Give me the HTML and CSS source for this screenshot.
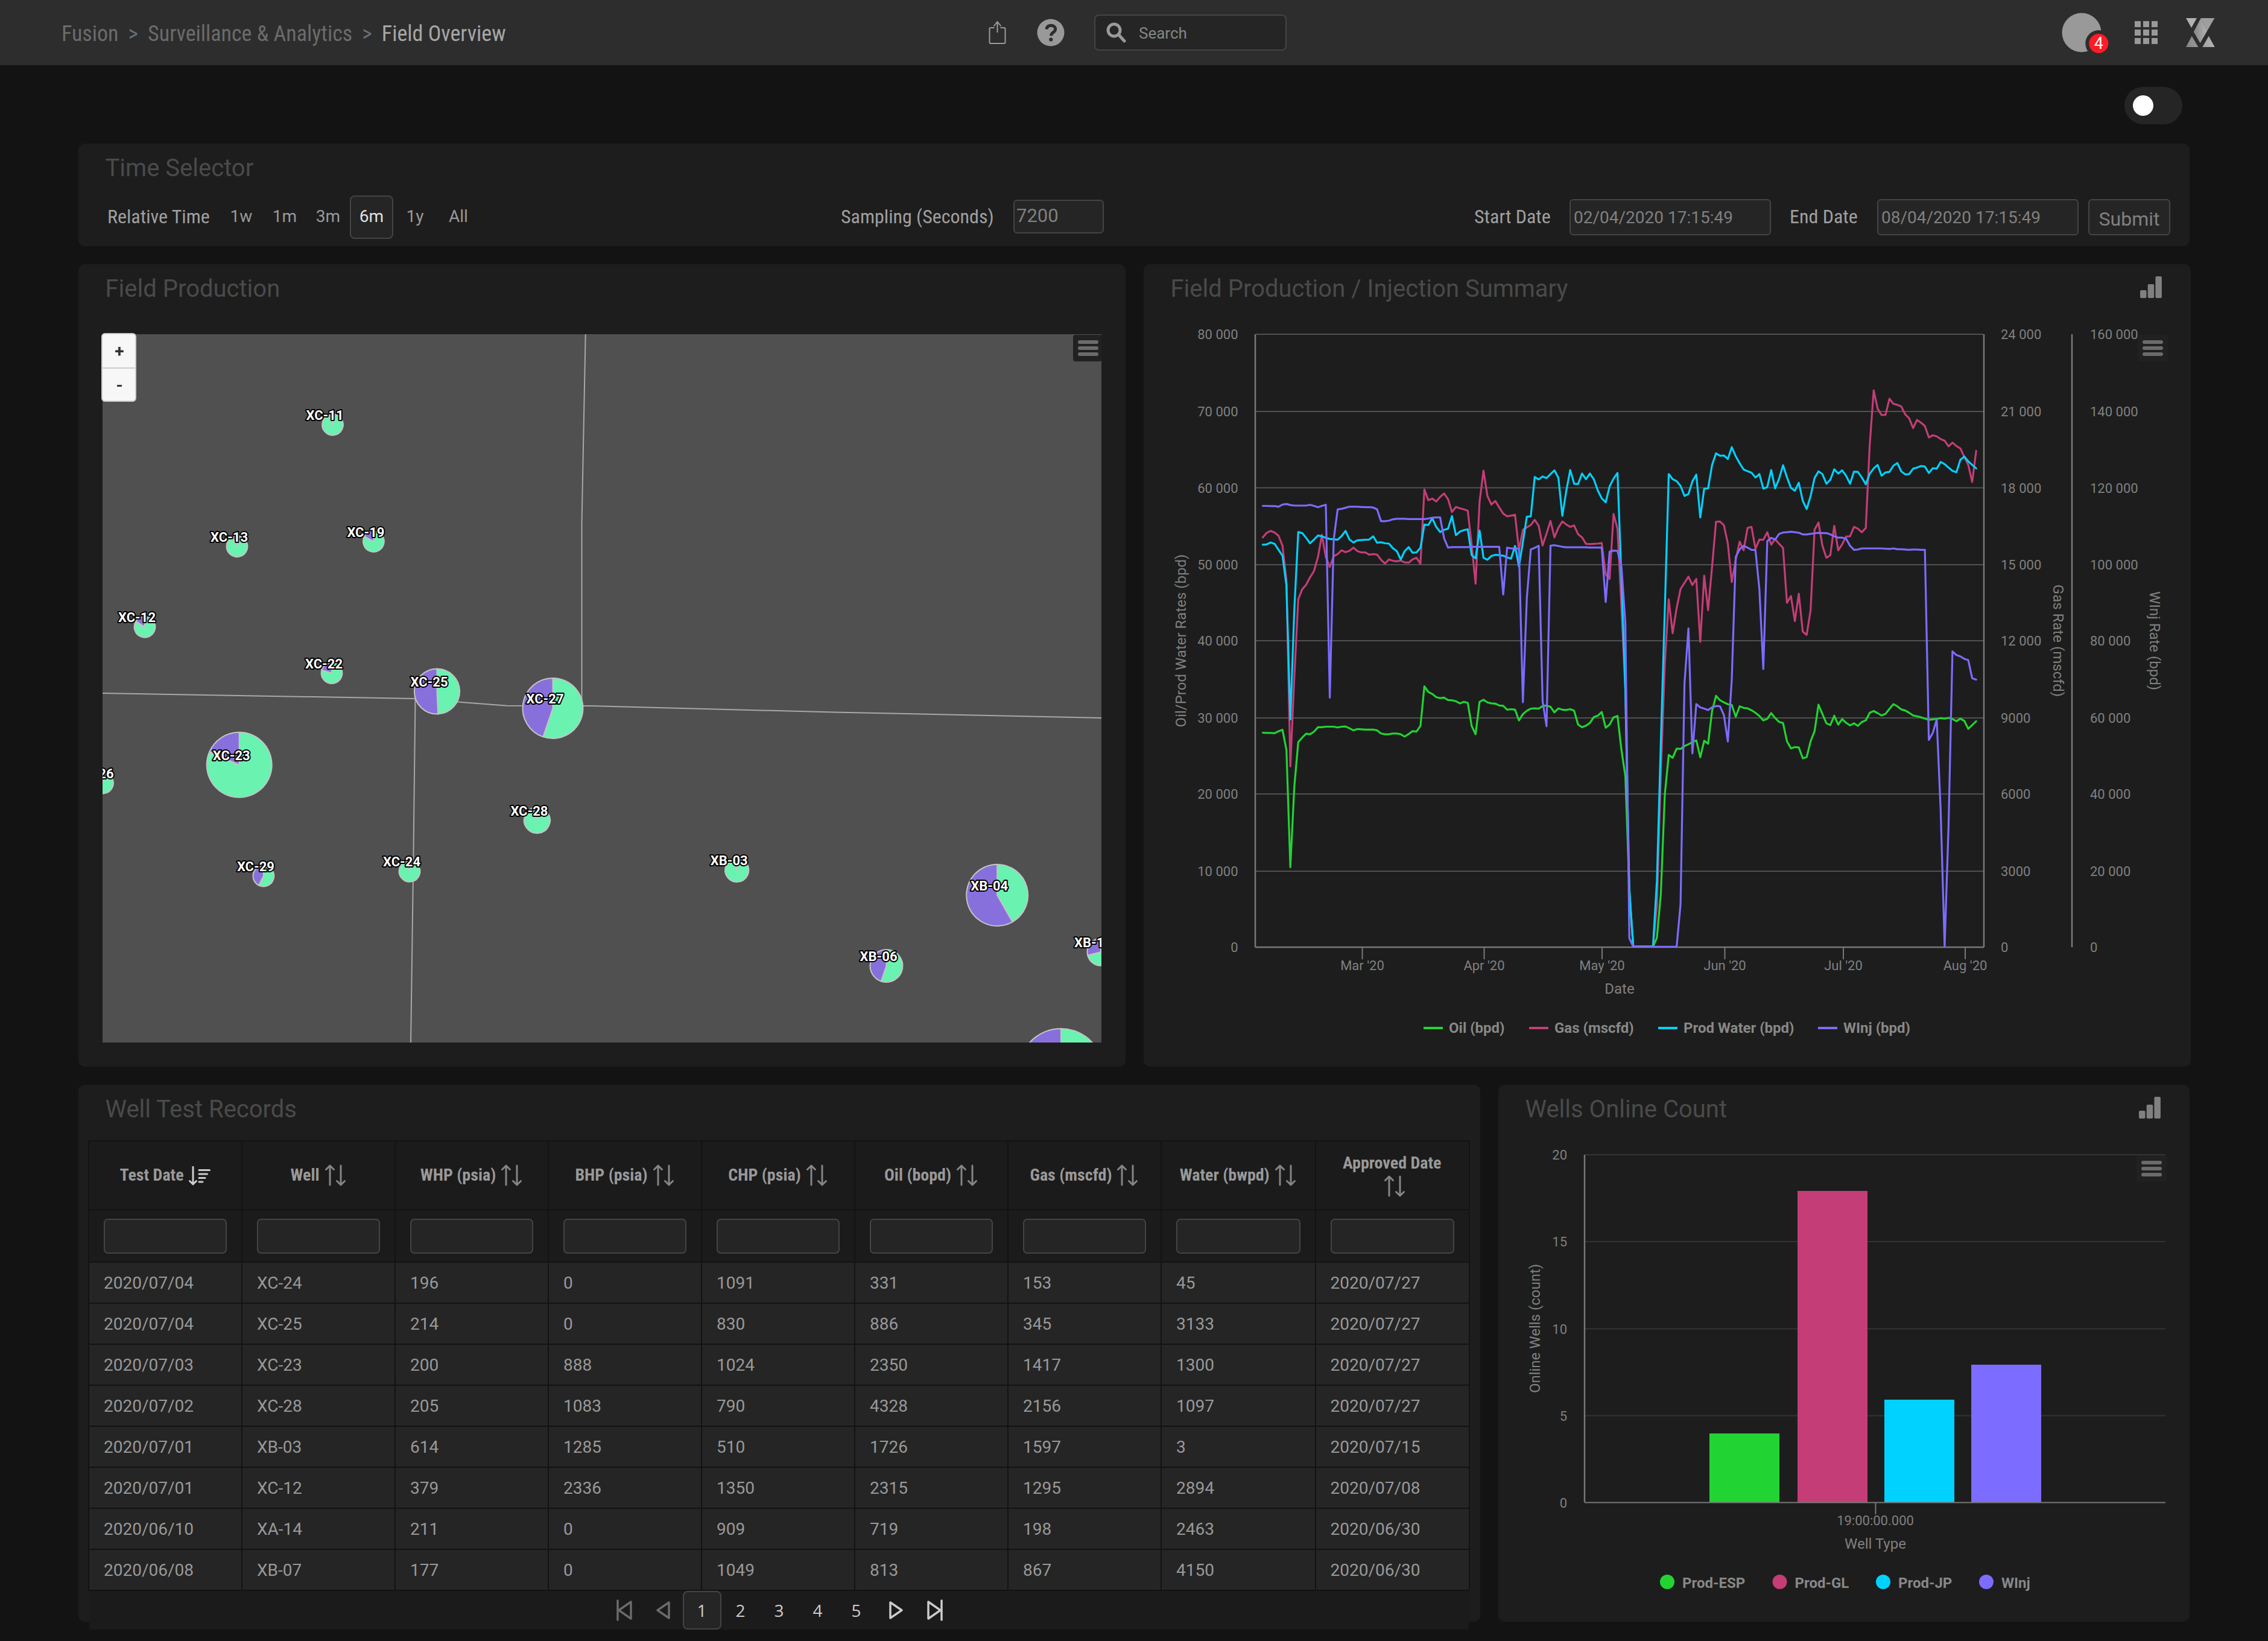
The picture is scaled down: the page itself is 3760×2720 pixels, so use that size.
FILE: index.html
```html
<!DOCTYPE html>
<html lang="en">
<head>
<meta charset="utf-8">
<title>Field Overview</title>
<link rel="stylesheet" href="styles.css">
</head>
<body>
<svg class="sprite" aria-hidden="true">
  <symbol id="sort" viewBox="0 0 36 36"><path d="M9 34V2M2.500 8.500 9 2l6.500 6.500M27 2v32M20.500 27.500 27 34l6.500-6.500"/></symbol>
  <symbol id="signal" viewBox="0 0 36 36"><rect x="0" y="23" width="10.500" height="13" rx="2"/><rect x="12.700" y="13" width="10.500" height="23" rx="2"/><rect x="25.400" y="0" width="10.500" height="36" rx="2"/></symbol>
</svg>

<header class="topbar">
  <nav class="crumbs"><a>Fusion</a><i>&gt;</i><a>Surveillance &amp; Analytics</a><i>&gt;</i><b>Field Overview</b></nav>
  <svg class="share" viewBox="0 0 30 40"><path d="M9.500 12H3.500a2 2 0 0 0-2 2V36a2 2 0 0 0 2 2h22a2 2 0 0 0 2-2V14a2 2 0 0 0-2-2h-6M14.500 20V2M8.500 9.500 14.500 2l6 7.500"/></svg>
  <svg class="help" viewBox="0 0 46 46"><circle cx="23" cy="23" r="22.500"/><path d="M16 17.500c.6-4.200 3.600-6.300 7.400-6.300 4.300 0 7.300 2.400 7.300 6 0 5.600-7.200 5.600-7.200 11"/><circle class="dot" cx="23.300" cy="34.500" r="3.100"/></svg>
  <div class="search"><svg viewBox="0 0 34 34"><circle cx="13" cy="13" r="10"/><path d="m20.500 20.500 9.500 10.500"/></svg><span>Search</span></div>
  <div class="tools">
    <svg class="avatar" viewBox="0 0 80 68"><circle class="face" cx="33" cy="34" r="32.500"/><circle class="ring" cx="61.300" cy="52" r="22"/><circle class="badge" cx="61.300" cy="52" r="16"/><text x="61.300" y="60.500">4</text></svg>
    <div class="apps"><i></i><i></i><i></i><i></i><i></i><i></i><i></i><i></i><i></i></div>
    <svg class="logo" viewBox="0 0 48 48">
      <defs><linearGradient id="lg"><stop offset="0" stop-color="#858585"/><stop offset="1" stop-color="#b4b4b4"/></linearGradient></defs>
      <path fill="#b2b2b2" d="M0 0h18L9 16z"/>
      <path fill="url(#lg)" d="M24.700 0 12.700 22.700l10.900 18.600L35 21.500z"/>
      <path fill="#9e9e9e" d="M24.700 0h22.800L35 21.500z"/>
      <path fill="url(#lg)" d="M9.700 29.700 0 48h20.300zM37.700 29.700 27.300 48h20.400z"/>
    </svg>
  </div>
</header>

<main>
  <div class="switch-row"><span class="switch"></span></div>

  <section class="card time">
    <h2>Time Selector</h2>
    <div class="time-row">
      <span class="label rel">Relative Time</span>
      <span class="range">1w</span><span class="range">1m</span><span class="range">3m</span><span class="range on">6m</span><span class="range">1y</span><span class="range">All</span>
      <span class="label samp">Sampling (Seconds)</span><span class="field short">7200</span>
      <span class="label start">Start Date</span><span class="field">02/04/2020 17:15:49</span>
      <span class="label end">End Date</span><span class="field">08/04/2020 17:15:49</span>
      <span class="submit">Submit</span>
    </div>
  </section>

  <div class="row">
    <section class="card production">
      <h2>Field Production</h2>
      <div class="map">
        <svg id="map" viewBox="170 554 1656 1174"></svg>
        <div class="zoom"><span>+</span><span>-</span></div>
      </div>
    </section>
    <section class="card summary">
      <div class="head"><h2>Field Production / Injection Summary</h2><svg class="signal"><use href="#signal"/></svg></div>
      <svg id="lines" viewBox="1896 538 1736 1230"></svg>
    </section>
  </div>

  <div class="row">
    <section class="card tests">
      <h2>Well Test Records</h2>
      <table>
        <colgroup><col><col><col><col><col><col><col><col class="wide"><col class="wide"></colgroup>
        <thead>
          <tr class="names">
            <th><span>Test Date<svg class="sorted" viewBox="0 0 36 32"><path d="M7 1v29M1.500 24.500 7 30l5.500-5.500M17 6.500h17.500M17 13h13.500M17 19.500h10M17 26h6"/></svg></span></th>
            <th><span>Well<svg><use href="#sort"/></svg></span></th>
            <th><span>WHP (psia)<svg><use href="#sort"/></svg></span></th>
            <th><span>BHP (psia)<svg><use href="#sort"/></svg></span></th>
            <th><span>CHP (psia)<svg><use href="#sort"/></svg></span></th>
            <th><span>Oil (bopd)<svg><use href="#sort"/></svg></span></th>
            <th><span>Gas (mscfd)<svg><use href="#sort"/></svg></span></th>
            <th><span>Water (bwpd)<svg><use href="#sort"/></svg></span></th>
            <th><span class="two">Approved Date<svg><use href="#sort"/></svg></span></th>
          </tr>
          <tr class="filters"><td><i></i></td><td><i></i></td><td><i></i></td><td><i></i></td><td><i></i></td><td><i></i></td><td><i></i></td><td><i></i></td><td><i></i></td></tr>
        </thead>
        <tbody>
          <tr><td>2020/07/04</td><td>XC-24</td><td>196</td><td>0</td><td>1091</td><td>331</td><td>153</td><td>45</td><td>2020/07/27</td></tr>
          <tr><td>2020/07/04</td><td>XC-25</td><td>214</td><td>0</td><td>830</td><td>886</td><td>345</td><td>3133</td><td>2020/07/27</td></tr>
          <tr><td>2020/07/03</td><td>XC-23</td><td>200</td><td>888</td><td>1024</td><td>2350</td><td>1417</td><td>1300</td><td>2020/07/27</td></tr>
          <tr><td>2020/07/02</td><td>XC-28</td><td>205</td><td>1083</td><td>790</td><td>4328</td><td>2156</td><td>1097</td><td>2020/07/27</td></tr>
          <tr><td>2020/07/01</td><td>XB-03</td><td>614</td><td>1285</td><td>510</td><td>1726</td><td>1597</td><td>3</td><td>2020/07/15</td></tr>
          <tr><td>2020/07/01</td><td>XC-12</td><td>379</td><td>2336</td><td>1350</td><td>2315</td><td>1295</td><td>2894</td><td>2020/07/08</td></tr>
          <tr><td>2020/06/10</td><td>XA-14</td><td>211</td><td>0</td><td>909</td><td>719</td><td>198</td><td>2463</td><td>2020/06/30</td></tr>
          <tr><td>2020/06/08</td><td>XB-07</td><td>177</td><td>0</td><td>1049</td><td>813</td><td>867</td><td>4150</td><td>2020/06/30</td></tr>
        </tbody>
      </table>
      <div class="pager">
        <span class="off"><svg viewBox="0 0 28 36"><path d="M2 2v32M24 4v28L4 18z"/></svg></span>
        <span class="off"><svg viewBox="0 0 28 36"><path d="M23 5v26L4 18z"/></svg></span>
        <span class="on">1</span><span>2</span><span>3</span><span>4</span><span>5</span>
        <span><svg viewBox="0 0 28 36"><path d="M6 5v26l19-13z"/></svg></span>
        <span><svg viewBox="0 0 28 36"><path d="M27 2v32M5 4v28l20-14z"/></svg></span>
      </div>
    </section>
    <section class="card online">
      <div class="head"><h2>Wells Online Count</h2><svg class="signal"><use href="#signal"/></svg></div>
      <svg id="bars" viewBox="2484 1898 1146 790"></svg>
    </section>
  </div>
</main>
<script src="script.js"></script>
</body>
</html>
```
FILE: styles.css
```css
* { box-sizing: border-box; }
html, body { margin: 0; padding: 0; }
body { width: 3760px; height: 2720px; overflow: hidden; background: #131313; color: #999; font-family: Roboto, "Noto Sans", sans-serif; font-size: 28px; }
svg { display: block; flex: none; }
i { font-style: normal; }
.sprite { position: absolute; width: 0; height: 0; }

/* top bar */
.topbar { display: flex; align-items: center; height: 108px; padding: 0 88px 0 102px; background: #2d2d2d; }
.crumbs { display: flex; gap: 16px; width: 1537px; padding-top: 3px; font: 36px/1 "Roboto Condensed", Roboto, sans-serif; color: #6b6b6b; }
.crumbs i { color: #64707b; }
.crumbs b { font-weight: 400; color: #a6a6a6; }
.share { width: 30px; height: 40px; fill: none; stroke: #999; stroke-width: 2; }
.help { width: 46px; height: 46px; margin-left: 50px; fill: #999; }
.help path { fill: none; stroke: #2d2d2d; stroke-width: 5; }
.help .dot { fill: #2d2d2d; }
.search { display: flex; align-items: center; gap: 20px; width: 319px; height: 60px; margin-left: 49px; padding-left: 18px; background: #252525; border: 2px solid #444; border-radius: 8px; font-size: 26px; color: #858585; }
.search svg { width: 34px; height: 34px; fill: none; stroke: #999; stroke-width: 5; stroke-linecap: round; }
.search span { padding-top: 2px; }
.tools { display: flex; align-items: center; margin-left: auto; }
.avatar { width: 80px; height: 68px; margin-right: 41px; }
.avatar .face { fill: #999; }
.avatar .ring { fill: #2d2d2d; }
.avatar .badge { fill: #ff1c24; }
.avatar text { fill: #fff; font: 27px Roboto, sans-serif; text-anchor: middle; }
.apps { display: grid; grid-template-columns: repeat(3, 10px); gap: 4px; margin-right: 47px; }
.apps i { height: 10px; background: #999; }
.logo { width: 48px; height: 48px; }

/* page */
main { padding: 0 128px 0 130px; }
.switch-row { display: flex; justify-content: flex-end; height: 130px; padding: 36px 14px 0 0; }
.switch { display: flex; align-items: center; width: 96px; height: 62px; padding-left: 14px; border-radius: 31px; background: #252525; }
.switch::before { content: ""; width: 34px; height: 34px; border-radius: 50%; background: #fff; }
.card { background: #1d1d1d; border-radius: 10px; }
.row { display: flex; gap: 30px; margin-top: 30px; }
h2 { margin: 0; padding-left: 44.500px; font-size: 40px; font-weight: 400; line-height: 82px; color: #4a4a4a; }
.head { display: flex; justify-content: space-between; height: 100px; }
.signal { width: 36px; height: 36px; margin: 20px 48px 0 0; fill: #808080; }

/* time selector */
.time { width: 3500px; height: 170px; }
.time-row { display: flex; align-items: center; height: 80px; padding: 0 32px 0 48px; color: #8c8c8c; }
.label { padding-bottom: 2px; font: 32px/1 "Roboto Condensed", Roboto, sans-serif; color: #a0a0a0; }
.rel { width: 186px; }
.range { display: flex; align-items: center; justify-content: center; width: 72px; height: 72px; padding-bottom: 3px; color: #999; }
.range.on { border: 2px solid #444; border-radius: 8px; background: #252525; color: #e0e0e0; }
.samp { width: 286px; margin-left: 598px; }
.field { display: flex; align-items: center; width: 334px; height: 60px; padding-left: 5px; border: 2px solid #444; border-radius: 6px; background: #252525; color: #808080; }
.field.short { width: 150px; height: 56px; margin-bottom: 3px; padding-left: 3px; padding-bottom: 2px; font-size: 31px; }
.start { width: 158px; margin-left: auto; }
.end { width: 145px; margin-left: 31px; }
.submit { display: flex; align-items: center; justify-content: center; width: 136px; height: 60px; margin-left: 16px; padding-top: 5px; border: 2px solid #444; border-radius: 6px; background: #252525; color: #808080; font-size: 32px; }

/* map */
.production, .summary { width: 1736px; height: 1330px; }
.map { position: relative; width: 1656px; height: 1174px; margin: 34px 0 0 40px; background: #505050; }
.map > svg { width: 1656px; height: 1174px; }
.zoom { position: absolute; left: -2px; top: -2px; width: 58px; border: 2px solid #ccc; border-radius: 6px; background: #f7f7f7; overflow: hidden; }
.zoom span { display: flex; align-items: center; justify-content: center; height: 55px; padding: 2px 0 0 2px; color: #333; font-size: 28px; font-weight: 700; }
.zoom span + span { border-top: 2px solid #ccc; }
.road { fill: none; stroke: #a8a8a8; stroke-width: 2; }
.slice { stroke: #c4c4c4; stroke-width: 2; stroke-linejoin: round; }
.well { fill: #fff; font: 700 22px Roboto, sans-serif; stroke: #000; stroke-width: 4px; stroke-linejoin: round; paint-order: stroke; }

/* charts */
#lines { width: 1736px; height: 1230px; }
#bars { width: 1146px; height: 790px; }
.tick { fill: #808080; font: 22px Roboto, sans-serif; }
.title { fill: #808080; font: 24px Roboto, sans-serif; text-anchor: middle; }
.legend { fill: #888; font: 700 24px Roboto, sans-serif; }
.mid { text-anchor: middle; }
.right { text-anchor: end; }
.grid { stroke: #505050; stroke-width: 2; }
.grid.faint { stroke: #333; }
.axis { stroke: #787878; stroke-width: 2.500; }
.thin { stroke: #787878; stroke-width: 2; }
.series { fill: none; stroke-width: 3.200; stroke-linejoin: round; stroke-linecap: round; }
.menu-bg { fill: #212121; }
.menu-line { stroke: #6b6b6b; stroke-width: 6; stroke-linecap: round; }

/* table */
.tests { width: 2324px; height: 890px; }
.tests h2 { height: 92px; }
table { width: 2291px; margin-left: 16px; table-layout: fixed; border: 2px solid #131313; border-bottom: 0; border-right: 0; border-spacing: 0; }
col { width: 254px; }
col.wide { width: 255.500px; }
th, td { padding: 0; border-right: 2px solid #131313; border-bottom: 2px solid #131313; }
.names th { height: 114px; background: #1b1b1b; font: 700 28px/1 "Roboto Condensed", Roboto, sans-serif; color: #999; }
.names span { display: flex; align-items: center; justify-content: center; gap: 8px; margin: -1px 1px 0 0; }
.names .two { flex-direction: column; gap: 6px; margin-top: 1px; }
.names svg { width: 36px; height: 36px; fill: none; stroke: #858585; stroke-width: 3; stroke-linecap: round; stroke-linejoin: round; }
.names .two svg { margin-left: 8px; }
.names .sorted { height: 32px; margin-top: 3px; stroke: #ccc; }
.filters td { height: 87px; padding: 0 24px; background: #1b1b1b; }
.filters i { display: block; height: 58px; border: 2px solid #444; border-radius: 7px; background: #252525; }
tbody td { height: 68px; padding-left: 24px; background: #252525; color: #999; }
.pager { display: flex; justify-content: center; width: 2287px; height: 64px; margin-left: 18px; background: #1b1b1b; font-family: "Open Sans", sans-serif; color: #ccc; }
.pager span { display: flex; align-items: center; justify-content: center; width: 64px; height: 64px; }
.pager svg { width: 28px; height: 36px; fill: none; stroke: #ccc; stroke-width: 3.500; stroke-linejoin: round; stroke-linecap: round; overflow: visible; }
.pager .off svg { stroke: #6b6b6b; }
.pager .on { border: 2px solid #444; border-radius: 8px; background: #252525; }
.online { width: 1146px; height: 890px; }
```
FILE: script.js
```js
const text = (cls, x, y, s, extra = '') => `<text class="${cls}" x="${x}" y="${y}" ${extra}>${s}</text>`;
const line = (cls, x1, y1, x2, y2) => `<line class="${cls}" x1="${x1}" y1="${y1}" x2="${x2}" y2="${y2}"/>`;
const menu = (x, y, w, h) =>
  `<rect class="menu-bg" x="${x}" y="${y}" width="${w}" height="${h}" rx="4"/>` +
  [12, 22, 32].map(d => line('menu-line', x + 11, y + d, x + 39, y + d)).join('');

/* Field map: [name, x, y, radius, share of the first slice in degrees] */
const wells = [
  ['XC-11', 551.5, 704, 17.4, 345], ['XC-13', 393, 905.7, 17.4, 333], ['XC-19', 619.4, 897.5, 17.4, 299],
  ['XC-12', 240, 1039.3, 17.4, 303], ['XC-22', 550, 1115.6, 17.4, 286], ['XC-25', 724.5, 1146, 37.6, 177.4],
  ['XC-27', 916.5, 1174, 50, 198.8], ['XC-23', 396.7, 1267.8, 54, 293.7], ['XC-26', 170.5, 1298, 17.4, 350],
  ['XC-29', 436.9, 1452, 17.4, 207], ['XC-24', 679, 1444.3, 17.4, 336], ['XC-28', 890.4, 1359.6, 21.6, 350],
  ['XB-03', 1221.7, 1442.3, 19.6, 352], ['XB-04', 1653.2, 1483.8, 51, 150.3], ['XB-06', 1469.5, 1601, 27, 199],
  ['XB-10', 1825, 1578, 22.5, 256], ['', 1759, 1775, 70, 200]
];
function pie([name, x, y, r, deg]) {
  const a = deg * Math.PI / 180, ex = x + r * Math.sin(a), ey = y - r * Math.cos(a), big = deg > 180;
  return `<path class="slice" fill="#6af2b0" d="M${x} ${y}V${y - r}A${r} ${r} 0 ${+big} 1 ${ex} ${ey}Z"/>` +
    `<path class="slice" fill="#8870dc" d="M${x} ${y}L${ex} ${ey}A${r} ${r} 0 ${+!big} 1 ${x} ${y - r}Z"/>`;
}
document.getElementById('map').innerHTML =
  '<path class="road" d="M970.7 554 964.500 868V1170M170 1149 688.500 1158 760 1163.500 840.400 1169.800 980 1170 1382 1180.500 1826 1190M688.500 1158 685.400 1419 681 1728"/>' +
  wells.map(pie).join('') +
  wells.map(w => text('well', w[1] - 44, w[2] - 8, w[0], w[0] ? 'textLength="62"' : '')).join('') + menu(1779, 555, 48, 44);

/* Daily series, 2 February to 1 August, as vertical plot positions */
const oil = [264,265,265,266,258,253,330,778,470,300,283,268,270,260,243,243,241,241,241,244,241,240,247,255,250,251,252,252,252,255,267,270,270,267,267,270,279,269,258,260,238,87,108,116,128,132,130,139,140,144,152,146,150,238,270,146,138,148,152,153,160,161,176,174,176,217,193,180,172,171,172,162,160,165,186,171,176,177,174,180,233,243,237,227,204,199,185,245,233,205,200,330,430,860,1082,1082,1082,1082,1082,1082,1048,880,500,349,360,325,326,315,308,300,293,358,295,306,180,123,140,148,155,158,203,163,169,171,178,188,200,217,211,189,208,223,227,297,324,319,320,362,357,297,258,157,193,228,235,199,233,212,226,236,228,238,223,217,188,181,189,198,192,173,155,163,175,179,188,198,201,205,210,215,213,211,208,210,207,212,220,210,219,249,235,220];
const gas = [1032,1015,1008,1014,1026,1063,1190,1882,1550,1262,1225,1208,1180,1157,1105,1023,1105,1142,1102,1094,1080,1087,1082,1070,1083,1088,1088,1096,1094,1096,1115,1129,1114,1119,1121,1118,1125,1126,1114,1108,1130,854,894,888,899,882,869,890,938,919,924,928,933,1060,1204,900,784,878,910,897,921,944,954,951,948,1080,1004,995,986,967,989,1062,1018,971,1032,996,973,984,993,988,1020,1032,1056,1057,1056,1055,1053,1170,1186,945,1000,1290,1600,2350,2551,2551,2551,2551,2551,2551,2400,1909,1500,1262,1388,1295,1224,1201,1178,1209,1186,1420,1174,1302,1140,974,973,987,1055,1198,1115,1048,1080,997,993,1074,1040,1041,1013,1059,1038,1056,1071,1275,1250,1343,1241,1382,1394,1302,1003,977,1063,1108,1098,989,1080,1058,1029,1028,993,1000,1013,997,690,486,554,578,577,517,536,540,546,575,590,626,596,606,619,661,653,657,667,673,694,680,693,702,734,763,826,711];
const water = [1059,1058,1051,1056,1078,1100,1210,1708,1300,1012,1016,1034,1054,1040,1025,1028,1034,1038,1039,1041,1027,1008,1040,1051,1043,1042,1041,1040,1028,1052,1050,1054,1055,1072,1083,1114,1083,1068,1089,1088,1070,985,986,961,993,1012,1004,1000,953,1024,1011,1005,1002,1098,1110,1007,1108,1115,1101,1097,1098,1100,1106,1111,1064,1140,1050,955,954,808,817,806,812,797,783,811,952,860,782,833,834,795,816,795,817,858,887,902,843,814,793,1180,1598,2346,2551,2551,2551,2551,2551,2551,2307,1792,1300,797,816,823,841,878,871,824,799,958,851,850,763,720,729,728,741,697,731,757,780,786,792,810,797,851,845,782,850,814,764,809,848,859,829,896,927,879,811,787,797,833,818,779,795,783,803,833,788,789,810,835,796,776,763,803,791,789,766,756,787,798,797,777,773,767,769,793,775,777,752,760,773,785,790,744,732,750,763,776];
const winj = [915,915,916,916,918,910,908,912,914,914,914,914,911,915,920,915,911,1627,1040,928,926,922,918,918,918,919,920,920,921,928,972,972,970,965,963,963,963,964,964,964,964,964,962,959,958,958,1035,1070,1068,1068,1068,1068,1068,1067,1067,1067,1067,1067,1067,1067,1067,1244,1070,1073,1073,1074,1644,1255,1077,1071,1063,1640,1733,1063,1061,1064,1067,1069,1069,1069,1069,1069,1069,1070,1070,1070,1070,1272,1085,1081,1082,1140,1350,2520,2552,2552,2552,2552,2552,2552,2552,2552,2552,2552,2552,2552,2394,1575,1370,1834,1651,1663,1668,1673,1663,1658,1659,1692,1790,1560,1104,1076,1063,1070,1078,1079,1225,1521,1046,1034,1040,1019,1014,1013,1011,1013,1015,1021,1021,1019,1017,1015,1016,1016,1021,1028,1033,1033,1037,1063,1078,1077,1073,1073,1073,1073,1073,1073,1074,1075,1073,1076,1076,1077,1078,1077,1077,1078,1078,1784,1758,1708,2045,2551,2103,1455,1469,1474,1483,1488,1555,1560];

function series(data, color, top, scale) {
  const pts = data.map((v, i) => (2093.5 + i * 6.534).toFixed(1) + ',' + (top + v / scale).toFixed(1)).join(' ');
  return `<polyline class="series" stroke="${color}" points="${pts}"/>`;
}
const GREEN = '#22d433', PINK = '#c43d76', CYAN = '#00d2ff', VIOLET = '#7c6cff';
const rows = [
  [554, '80 000', '24 000', '160 000'], [682, '70 000', '21 000', '140 000'], [808.5, '60 000', '18 000', '120 000'],
  [936, '50 000', '15 000', '100 000'], [1062, '40 000', '12 000', '80 000'], [1190, '30 000', '9000', '60 000'],
  [1316, '20 000', '6000', '40 000'], [1444, '10 000', '3000', '20 000'], [1570, '0', '0', '0']
];
let s = '';
for (const [y, a, b, c] of rows) {
  if (y < 1570) s += line('grid', 2082, y, 3288, y);
  s += text('tick right', 2052.5, y + 8, a) + text('tick', 3317, y + 8, b) + text('tick', 3465, y + 8, c);
}
s += line('axis', 2081, 554, 2081, 1570) + line('axis', 3289, 554, 3289, 1570) + line('axis', 3435, 554, 3435, 1570) + line('axis', 2081, 1570, 3289, 1570);
for (const [x, m] of [[2258.5, 'Mar'], [2460.5, 'Apr'], [2656, 'May'], [2859.5, 'Jun'], [3056, 'Jul'], [3258, 'Aug']])
  s += line('thin', x, 1570, x, 1590) + text('tick mid', x, 1608, m + " '20");
s += series(oil, GREEN, 1100, 2.306) + series(gas, PINK, 430, 2.24) + series(water, CYAN, 430, 2.24) + series(winj, VIOLET, 430, 2.24);
s += text('title', 2685, 1647, 'Date');
s += text('title', 0, 0, 'Oil/Prod Water Rates (bpd)', 'transform="translate(1966 1062) rotate(-90)"');
s += text('title', 0, 0, 'Gas Rate (mscfd)', 'transform="translate(3404 1062) rotate(90)"');
s += text('title', 0, 0, 'WInj Rate (bpd)', 'transform="translate(3564 1062) rotate(90)"');
for (const [x, name, color] of [[2360, 'Oil (bpd)', GREEN], [2535, 'Gas (mscfd)', PINK], [2749, 'Prod Water (bpd)', CYAN], [3014, 'WInj (bpd)', VIOLET]])
  s += `<rect x="${x}" y="1702" width="32" height="4" fill="${color}"/>` + text('legend', x + 42, 1712, name);
document.getElementById('lines').innerHTML = s + menu(3544, 555, 50, 44);

let b = '';
for (const [y, v] of [[1914, 20], [2058, 15], [2202.5, 10], [2346.5, 5], [2490.5, 0]]) {
  if (v) b += line('grid faint', 2628, y, 3590, y);
  b += text('tick right', 2598, y + 8, v);
}
for (const [x, y, c] of [[2834, 2376, GREEN], [2980, 1974, PINK], [3124, 2320, CYAN], [3268, 2262, VIOLET]])
  b += `<rect x="${x}" y="${y}" width="116" height="${2490 - y}" fill="${c}"/>`;
b += line('axis', 2627, 1914, 2627, 2490) + line('thin', 2627, 2490.5, 3590, 2490.5) + line('thin', 3109.4, 2490, 3109.4, 2510);
b += text('tick mid', 3109, 2528, '19:00:00.000') + text('title', 3109, 2567, 'Well Type');
b += text('title', 0, 0, 'Online Wells (count)', 'transform="translate(2553.4 2202) rotate(-90)"');
for (const [x, name, c] of [[2764, 'Prod-ESP', GREEN], [2950.5, 'Prod-GL', PINK], [3122, 'Prod-JP', CYAN], [3293, 'WInj', VIOLET]])
  b += `<circle cx="${x}" cy="2622" r="12" fill="${c}"/>` + text('legend', x + 25, 2632, name);
document.getElementById('bars').innerHTML = b + menu(3542, 1915, 50, 44);
```
